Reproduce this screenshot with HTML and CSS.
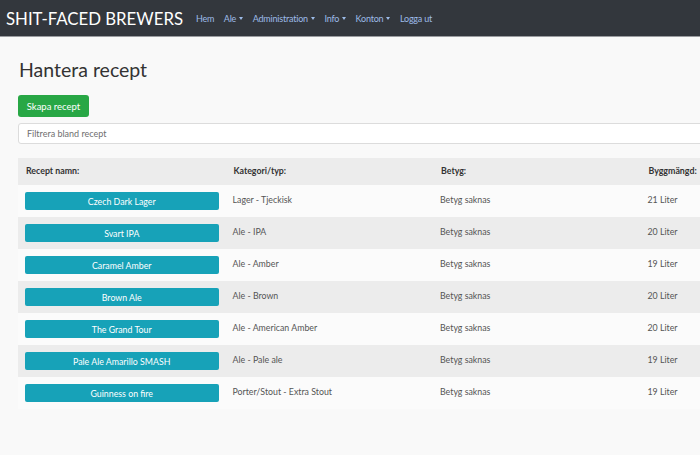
FILE: index.html
```html
<!DOCTYPE html>
<html lang="sv">
<head>
<meta charset="utf-8">
<title>Hantera recept</title>
<link rel="stylesheet" href="styles.css">
</head>
<body>
<nav class="navbar">
  <span class="brand">SHIT-FACED BREWERS</span>
  <ul class="nav">
    <li class="nav-item">Hem</li>
    <li class="nav-item dropdown">Ale</li>
    <li class="nav-item dropdown">Administration</li>
    <li class="nav-item dropdown">Info</li>
    <li class="nav-item dropdown">Konton</li>
    <li class="nav-item">Logga ut</li>
  </ul>
</nav>
<main class="content">
  <div class="inner">
    <h1 class="title">Hantera recept</h1>
    <button class="btn btn-green">Skapa recept</button>
    <input class="filter" type="text" placeholder="Filtrera bland recept">
    <table class="table">
      <thead>
        <tr><th>Recept namn:</th><th>Kategori/typ:</th><th>Betyg:</th><th>Byggmängd:</th></tr>
      </thead>
      <tbody>
        <tr><td><button class="btn btn-teal">Czech Dark Lager</button></td><td>Lager - Tjeckisk</td><td>Betyg saknas</td><td>21 Liter</td></tr>
        <tr><td><button class="btn btn-teal">Svart IPA</button></td><td>Ale - IPA</td><td>Betyg saknas</td><td>20 Liter</td></tr>
        <tr><td><button class="btn btn-teal">Caramel Amber</button></td><td>Ale - Amber</td><td>Betyg saknas</td><td>19 Liter</td></tr>
        <tr><td><button class="btn btn-teal">Brown Ale</button></td><td>Ale - Brown</td><td>Betyg saknas</td><td>20 Liter</td></tr>
        <tr><td><button class="btn btn-teal">The Grand Tour</button></td><td>Ale - American Amber</td><td>Betyg saknas</td><td>20 Liter</td></tr>
        <tr><td><button class="btn btn-teal">Pale Ale Amarillo SMASH</button></td><td>Ale - Pale ale</td><td>Betyg saknas</td><td>19 Liter</td></tr>
        <tr><td><button class="btn btn-teal">Guinness on fire</button></td><td>Porter/Stout - Extra Stout</td><td>Betyg saknas</td><td>19 Liter</td></tr>
      </tbody>
    </table>
  </div>
</main>
</body>
</html>
```
FILE: styles.css
```css
html { overflow: hidden; }
body {
  margin: 0;
  background: #f9f9f9;
  font-family: Lato, "Open Sans", sans-serif;
  color: #444;
}
.navbar {
  display: flex;
  align-items: center;
  height: 37px;
  background: #33373d;
  border-bottom: 1px solid #9a9ca0;
  padding: 0 6px;
  box-sizing: border-box;
}
.brand {
  color: #fff;
  font-size: 16.8px;
  letter-spacing: 0;
  margin-right: 13px;
  white-space: nowrap;
}
.nav {
  display: flex;
  list-style: none;
  margin: 0;
  padding: 0;
  gap: 9.5px;
}
.nav-item {
  color: #9dbbe8;
  font-size: 9px;
  letter-spacing: -0.2px;
  white-space: nowrap;
  padding-top: 1px;
}
.dropdown::after {
  content: "";
  display: inline-block;
  margin-left: 3px;
  vertical-align: 2px;
  border-top: 3px solid #9dbbe8;
  border-left: 2.5px solid transparent;
  border-right: 2.5px solid transparent;
}
.content {
  overflow: hidden;
  padding: 21px 0 0 18px;
}
.inner {
  width: 830px;
  display: flex;
  flex-direction: column;
  align-items: flex-start;
}
.title {
  margin: 0 0 13px 1px;
  font-size: 19.5px;
  font-weight: 400;
  color: #333;
  line-height: 24px;
}
.btn {
  border: none;
  font-family: inherit;
  color: #fff;
  cursor: pointer;
}
.btn-green {
  background: #28a745;
  border-radius: 3px;
  font-size: 9.5px;
  height: 22px;
  width: 71px;
  padding: 0;
}
.filter {
  margin-top: 6px;
  width: 100%;
  height: 21px;
  box-sizing: border-box;
  border: 1px solid #dcdcdc;
  border-radius: 3px;
  background: #fff;
  font-family: inherit;
  font-size: 9px;
  padding: 0 8px;
  color: #555;
}
.filter::placeholder { color: #6f6f6f; }
.table {
  margin-top: 14px;
  width: 100%;
  border-collapse: collapse;
  table-layout: fixed;
  font-size: 8.8px;
}
.table th {
  background: #ececec;
  height: 27px;
  text-align: left;
  font-weight: 700;
  color: #333;
  padding: 0 7px 2px 8px;
  box-sizing: border-box;
}
.table td {
  height: 32px;
  box-sizing: border-box;
  padding: 9px 7px 0 7px;
  vertical-align: top;
  color: #555;
}
.table td:first-child { padding-top: 7px; }
.table tbody tr:nth-child(odd) { background: #fbfbfb; }
.table tbody tr:nth-child(even) { background: #ececec; }
.btn-teal {
  display: block;
  width: 100%;
  height: 18px;
  background: #17a2b8;
  border-radius: 2px;
  font-size: 8.8px;
  padding: 0;
}
```
